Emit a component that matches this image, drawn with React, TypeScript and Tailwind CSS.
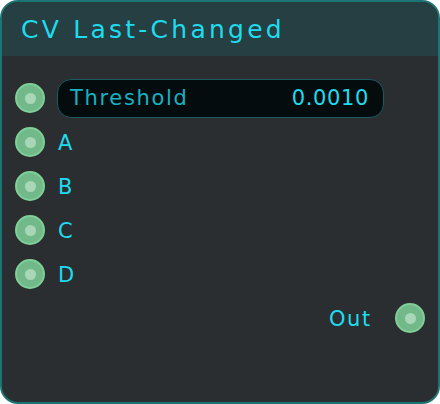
const SOCKET = "w-[30px] h-[30px] rounded-full bg-[#72b98a] border-2 border-[#7fcf98] flex items-center justify-center shrink-0";

function Socket() {
  return (
    <span className={SOCKET}>
      <span className="w-[11px] h-[11px] rounded-full bg-[#a9d6b7]" />
    </span>
  );
}

const INPUTS = ["A", "B", "C", "D"];

export default function App() {
  return (
    <div className="w-[440px] h-[404px] bg-[#2a2e30] border-2 border-[#1d7474] rounded-[18px] overflow-hidden flex flex-col font-['DejaVu_Sans',sans-serif]">
      <div className="h-[54px] bg-[#253f42] flex items-center px-[19px] pt-[1px] shrink-0">
        <h1 className="text-[25px] text-[#1edcee] tracking-[0.13em]">CV Last-Changed</h1>
      </div>
      <div className="flex flex-col pt-[20px] pl-[13px] pr-[13px]">
        <div className="flex items-center gap-[12px] h-[44px]">
          <Socket />
          <div className="flex-1 h-[39px] rounded-[14px] bg-[#050c0e] border border-[#1b5a5e] flex items-center justify-between pl-[12px] pr-[14px] pt-[2px] mr-[41px]">
            <span className="text-[21px] text-[#17b2c2] tracking-[0.08em]">Threshold</span>
            <span className="text-[21px] text-[#1edcee] tracking-[0.03em]">0.0010</span>
          </div>
        </div>
        {INPUTS.map((label) => (
          <div key={label} className="flex items-center gap-[13px] h-[44px]">
            <Socket />
            <span className="text-[21px] text-[#1edcee] pt-[3px]">{label}</span>
          </div>
        ))}
        <div className="flex items-center justify-end gap-[23px] h-[44px]">
          <span className="text-[21px] text-[#1edcee] tracking-[0.08em] pt-[3px]">Out</span>
          <Socket />
        </div>
      </div>
    </div>
  );
}
